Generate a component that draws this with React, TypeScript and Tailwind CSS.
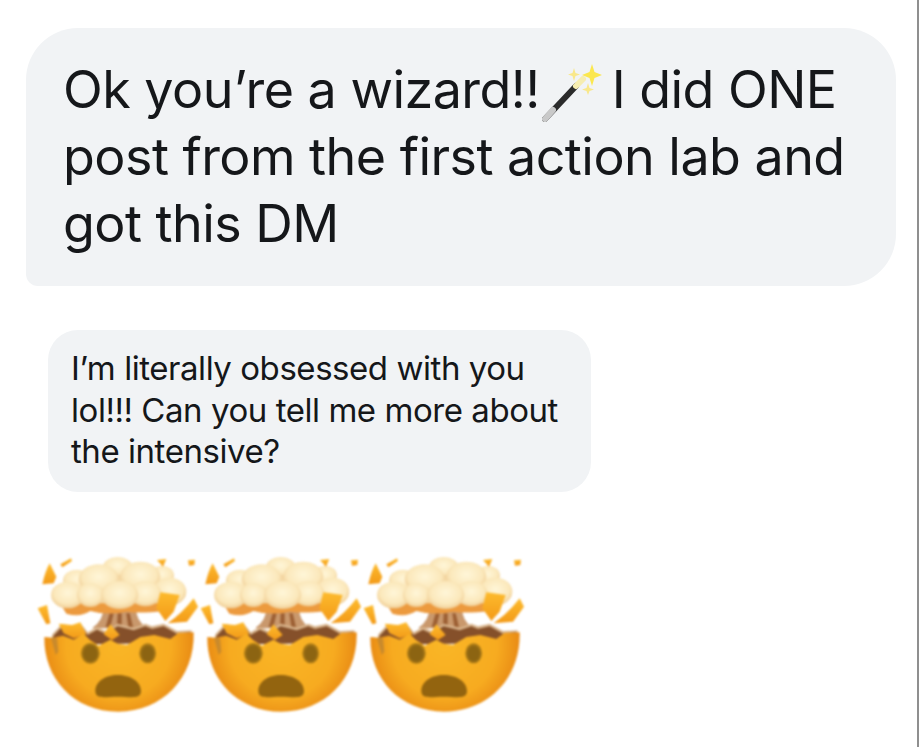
const INK = 'font-["Inter","Liberation_Sans",sans-serif] text-[#15171a]';

const Wand = () => (
  <svg viewBox="0 0 90 80" className="inline-block h-[80px] w-[90px] align-top overflow-visible blur-[0.5px]">
    <path d="M15 64 L46 31" stroke="#2b2b2b" strokeWidth="6" strokeLinecap="round" />
    <path d="M15 64 L23 55" stroke="#c9c9c9" strokeWidth="6" strokeLinecap="round" />
    <path d="M46 31 L53 24" stroke="#f6edb0" strokeWidth="6" strokeLinecap="round" />
    <path d="M62 9 L64.5 17 L72 20 L64.5 23 L62 31 L59.5 23 L52 20 L59.5 17 Z" fill="#fbe74f" />
    <path d="M44 13 L45.5 18 L50 19.5 L45.5 21 L44 26 L42.5 21 L38 19.5 L42.5 18 Z" fill="#f9e88a" />
    <path d="M58 28 L59.5 33 L64 34.5 L59.5 36 L58 40 L56.5 36 L52 34.5 L56.5 33 Z" fill="#f9e88a" />
  </svg>
);

const puffs = [
  [262, 66, 44, 30],
  [395, 92, 36, 30],
  [330, 96, 60, 46],
  [140, 106, 42, 32],
  [205, 102, 60, 44],
  [418, 140, 50, 42],
  [112, 150, 50, 40],
  [180, 150, 40, 36],
  [345, 146, 48, 38],
  [268, 150, 56, 42],
];

const MindBlown = () => (
  <svg viewBox="20 0 489 540" className="h-[180px] w-[163px] shrink-0 overflow-visible blur-[0.8px]">
    <defs>
      <radialGradient id="face" gradientUnits="userSpaceOnUse" cx="265" cy="300" r="225">
        <stop offset="0" stopColor="#fab626" />
        <stop offset="0.7" stopColor="#f7ab20" />
        <stop offset="1" stopColor="#e98b14" />
      </radialGradient>
      <radialGradient id="puff" cx="0.5" cy="0.42" r="0.58">
        <stop offset="0" stopColor="#fff6d8" />
        <stop offset="0.7" stopColor="#fbe8bb" />
        <stop offset="1" stopColor="#f0cd95" />
      </radialGradient>
      <linearGradient id="shard" x1="0" y1="0" x2="0" y2="1">
        <stop offset="0" stopColor="#fdbb2d" />
        <stop offset="1" stopColor="#f39a18" />
      </linearGradient>
    </defs>
    {/* stem */}
    <path d="M218 190 L318 190 Q316 226 350 250 L185 250 Q220 226 218 190 Z" fill="#c9986c" />
    <path d="M238 205 L226 246 L240 246 L250 205 Z M262 205 L260 246 L274 246 L274 205 Z M288 205 L294 246 L308 246 L298 205 Z" fill="#9c5f33" />
    {/* underside of the cloud */}
    <path d="M80 160 L450 155 L400 198 Q330 206 290 200 Q230 212 180 198 Q150 218 108 206 Z" fill="#ec9a3e" />
    {/* cloud */}
    <path d="M100 140 L150 85 L260 50 L400 80 L440 140 L400 175 L110 175 Z" fill="#f3d6a2" />
    {puffs.map(([cx, cy, rx, ry]) => (
      <ellipse key={`${cx}-${cy}`} cx={cx} cy={cy} rx={rx} ry={ry} fill="url(#puff)" />
    ))}
    {/* loose shards */}
    <g fill="url(#shard)">
      <path d="M58 55 L78 95 L70 115 L36 118 Q44 80 58 55 Z" />
      <path d="M90 58 L122 40 L125 48 L96 67 Z" />
      <path d="M380 45 L408 42 L398 65 Z" />
      <path d="M473 46 L494 44 L492 60 L476 62 Z" />
      <path d="M22 190 L50 180 L60 235 L48 238 Z" />
      <path d="M390 142 L448 150 L430 200 L405 228 L378 190 Z" />
      <path d="M490 160 L503 185 L470 230 L412 235 Q455 205 490 160 Z" />
    </g>
    {/* broken rim */}
    <path d="M66 268 L95 236 L125 244 L150 234 L172 262 L200 246 L225 258 L262 236 L310 248 L345 236 L365 244 L400 236 L440 258 L484 256 L480 292 L60 300 Z" fill="#d8b48c" />
    <path d="M70 272 L98 242 L125 250 L150 240 L172 270 L200 254 L225 266 L262 244 L310 256 L345 244 L365 252 L400 244 L440 266 L480 262 L478 292 L60 300 Z" fill="#85502a" />
    <path d="M85 236 L125 240 L150 232 L168 268 L130 280 L100 265 Z" fill="url(#shard)" />
    <path d="M240 238 L268 270 L245 285 L220 268 Z" fill="url(#shard)" />
    {/* head */}
    <path
      d="M42 276 L68 278 L98 272 L130 284 L160 266 L178 284 L205 302 L240 284 L262 296 L290 300 L330 276 L372 270 L420 282 L444 264 L490 262 C494 400 395 500 264 500 C130 500 40 400 42 276 Z"
      fill="url(#face)"
    />
    <path d="M62 280 L80 278 L84 320 L76 330 Z" fill="#c98a2c" />
    {/* eyes and mouth */}
    <ellipse cx="180" cy="325" rx="28" ry="31" fill="#a67716" />
    <ellipse cx="180" cy="326" rx="22" ry="25" fill="#8c6412" />
    <ellipse cx="352" cy="325" rx="25" ry="30" fill="#a67716" />
    <ellipse cx="352" cy="326" rx="19" ry="24" fill="#8c6412" />
    <path d="M195 438 C195 410 225 390 262 390 C300 390 332 410 332 438 C332 464 300 455 262 455 C225 455 195 464 195 438 Z" fill="#93640f" />
  </svg>
);

export default function App() {
  return (
    <div className={`${INK} h-[747px] w-[919px] overflow-hidden border-r-2 border-[#8f8f8f] bg-white`}>
      <div className="pl-[26px] pt-[28px]">
        <div className="h-[258px] w-[870px] rounded-[52px] rounded-bl-[12px] bg-[#f1f3f5] pl-[37px] pt-[28px] text-[52px] leading-[67px] tracking-[-0.53px]">
          <div className="flex">
            <span>Ok you’re a wizard!!</span>
            <span className="relative w-[72px]">
              <span className="absolute -left-[10px] top-0 -mt-[1px]"><Wand /></span>
            </span>
            <span>I did ONE</span>
          </div>
          <div>post from the first action lab and</div>
          <div>got this DM</div>
        </div>
      </div>
      <div className="pl-[48px] pt-[44px]">
        <div className="h-[162px] w-[543px] rounded-[30px] bg-[#f1f3f5] pl-[23px] pt-[18px] text-[33px] leading-[41.5px] tracking-[-0.45px]">
          <div>I’m literally obsessed with you</div>
          <div>lol!!! Can you tell me more about</div>
          <div>the intensive?</div>
        </div>
      </div>
      <div className="flex pl-[37px] pt-[53px]">
        <MindBlown />
        <MindBlown />
        <MindBlown />
      </div>
    </div>
  );
}
